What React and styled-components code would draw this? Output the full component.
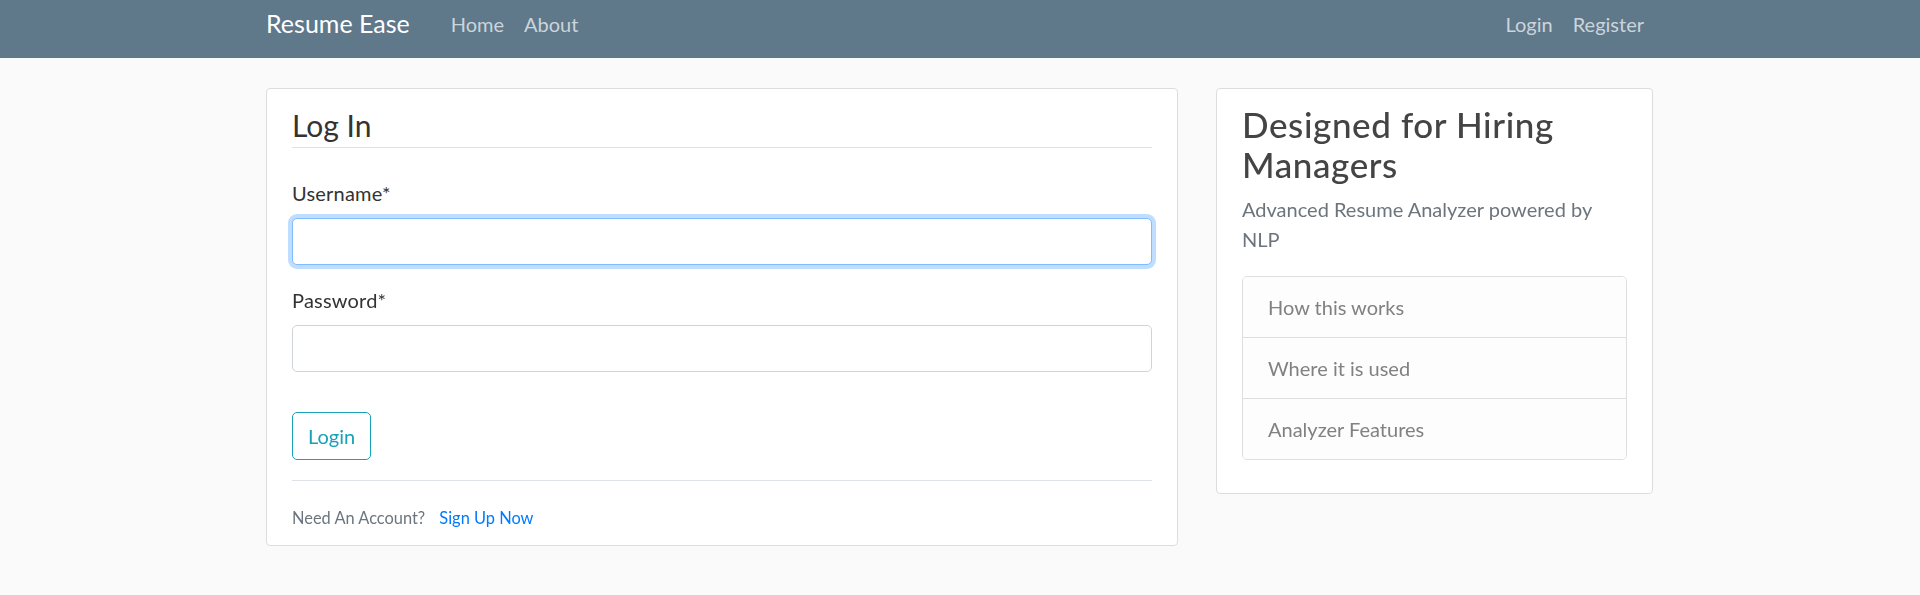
import React from 'react'
import styled, { createGlobalStyle } from 'styled-components'

const GlobalStyle = createGlobalStyle`
  html, body {
    margin: 0;
    padding: 0;
  }
  body {
    background: #fafafa;
    color: #333333;
    font-family: Lato, 'Open Sans', sans-serif;
    font-size: 20px;
    line-height: 30px;
  }
  * {
    box-sizing: border-box;
  }
`

const Navbar = styled.nav`
  height: 58px;
  background: #5f788a;
`

const NavInner = styled.div`
  width: 1388px;
  margin: 0 auto;
  display: flex;
  align-items: flex-start;
  padding-top: 8px;
`

const Brand = styled.a`
  font-size: 25px;
  line-height: 30px;
  color: #ffffff;
  text-decoration: none;
  margin-right: 31px;
`

const NavGroup = styled.div`
  display: flex;
  margin-top: 1px;
  margin-left: ${(p) => (p.$right ? 'auto' : '0')};
`

const NavLink = styled.a`
  color: #cbd5db;
  text-decoration: none;
  font-size: 20px;
  line-height: 30px;
  padding: 0 10px;
`

const Main = styled.main`
  width: 1388px;
  margin: 30px auto 0;
  display: flex;
  align-items: flex-start;
  gap: 38px;
`

const ContentSection = styled.div`
  width: ${(p) => p.$width}px;
  background: #ffffff;
  border: 1px solid #dddddd;
  border-radius: 4px;
  padding: ${(p) => p.$padTop}px 25px 12.5px;
`

const Fieldset = styled.fieldset`
  margin: 0 0 20px;
  padding: 0;
  border: 0;
  min-width: 0;
`

const Legend = styled.legend`
  display: block;
  width: 100%;
  padding: 0 0 4px;
  margin: 0 0 30px;
  font-size: 30px;
  line-height: 36px;
  color: #333333;
  border-bottom: 1px solid #dee2e6;
`

const FormGroup = styled.div`
  margin-bottom: 20px;
`

const Label = styled.label`
  display: block;
  margin-bottom: 10px;
  color: #333333;
  letter-spacing: 0.2px;
`

const Input = styled.input`
  display: block;
  width: 100%;
  height: 47px;
  padding: 7.5px 15px;
  font-family: inherit;
  font-size: 20px;
  color: #495057;
  caret-color: #333333;
  background: #ffffff;
  border: 1px solid ${(p) => (p.$focused ? '#80bdff' : '#ced4da')};
  border-radius: 5px;
  outline: none;
  box-shadow: ${(p) => (p.$focused ? '0 0 0 4px rgba(0, 123, 255, 0.25)' : 'none')};
`

const OutlineButton = styled.button`
  display: block;
  height: 47.5px;
  padding: 7.5px 15px;
  font-family: inherit;
  font-size: 20px;
  line-height: 30px;
  color: #17a2b8;
  background: transparent;
  border: 1px solid #17a2b8;
  border-radius: 5px;
`

const Footer = styled.div`
  border-top: 1px solid #dee2e6;
  padding-top: 20px;
`

const Small = styled.small`
  font-size: 16.4px;
  color: #6c757d;
`

const SignUp = styled.a`
  margin-left: 10px;
  color: #007bff;
  text-decoration: none;
`

const SideTitle = styled.h3`
  margin: 0 0 10px;
  font-size: 35px;
  line-height: 40px;
  font-weight: 500;
  letter-spacing: 0.6px;
  color: #444444;
`

const Muted = styled.p`
  margin: 0 0 22px;
  color: #6c757d;
`

const ListGroup = styled.ul`
  list-style: none;
  margin: 0 0 20px;
  padding: 0;
  border: 1px solid #dfdfdf;
  border-radius: 5px;
  overflow: hidden;
`

const ListItem = styled.li`
  padding: 15px 25px;
  background: #fdfdfe;
  color: #818182;
  & + & {
    border-top: 1px solid #dfdfdf;
  }
`

export default function App() {
  return (
    <>
      <GlobalStyle />
      <Navbar>
        <NavInner>
          <Brand href="#">Resume Ease</Brand>
          <NavGroup>
            <NavLink href="#">Home</NavLink>
            <NavLink href="#">About</NavLink>
          </NavGroup>
          <NavGroup $right>
            <NavLink href="#">Login</NavLink>
            <NavLink href="#">Register</NavLink>
          </NavGroup>
        </NavInner>
      </Navbar>
      <Main>
        <ContentSection $width={912} $padTop={18}>
          <form onSubmit={(e) => e.preventDefault()}>
            <Fieldset>
              <Legend>Log In</Legend>
              <FormGroup>
                <Label htmlFor="username">Username*</Label>
                <Input id="username" type="text" autoFocus $focused />
              </FormGroup>
              <FormGroup>
                <Label htmlFor="password">Password*</Label>
                <Input id="password" type="password" />
              </FormGroup>
            </Fieldset>
            <FormGroup>
              <OutlineButton type="submit">Login</OutlineButton>
            </FormGroup>
          </form>
          <Footer>
            <Small>
              Need An Account? <SignUp href="#">Sign Up Now</SignUp>
            </Small>
          </Footer>
        </ContentSection>
        <ContentSection $width={437} $padTop={15}>
          <SideTitle>Designed for Hiring Managers</SideTitle>
          <Muted>Advanced Resume Analyzer powered by NLP</Muted>
          <ListGroup>
            <ListItem>How this works</ListItem>
            <ListItem>Where it is used</ListItem>
            <ListItem>Analyzer Features</ListItem>
          </ListGroup>
        </ContentSection>
      </Main>
    </>
  )
}
